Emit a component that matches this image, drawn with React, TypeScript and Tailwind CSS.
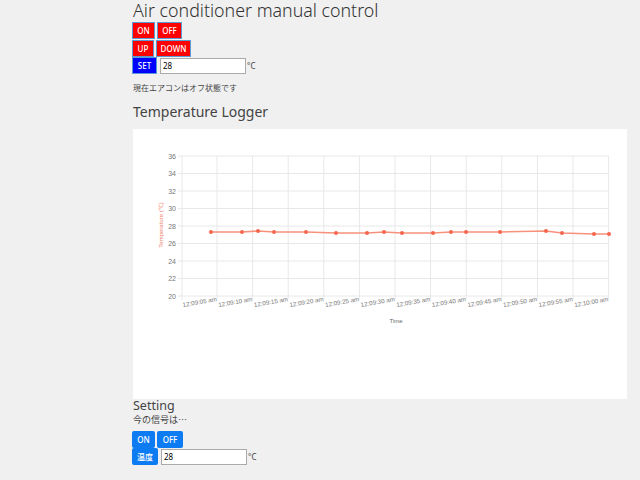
import React from 'react';

const font = { fontFamily: '"Noto Sans", "Noto Sans CJK JP", sans-serif' };

// chart geometry, relative to the white panel
const LEFT = 49;
const RIGHT = 476;
const TOP = 27;
const BOTTOM = 167;
const yTicks = [36, 34, 32, 30, 28, 26, 24, 22, 20];
const xLabels = [
  '12:09:05 am', '12:09:10 am', '12:09:15 am', '12:09:20 am', '12:09:25 am', '12:09:30 am',
  '12:09:35 am', '12:09:40 am', '12:09:45 am', '12:09:50 am', '12:09:55 am', '12:10:00 am',
];
const points: [number, number][] = [
  [211, 232], [242, 232], [258, 231], [274, 232], [306, 232], [336, 233], [367, 233],
  [384, 232], [402, 233], [433, 233], [451, 232], [466, 232], [500, 232], [546, 231],
  [562, 233], [594, 234], [609, 234],
].map(([x, y]) => [x - 133, y - 129] as [number, number]);

function Chart() {
  const yPos = (v: number) => TOP + ((36 - v) / 16) * (BOTTOM - TOP);
  const xPos = (i: number) => 84 + i * 35.6;
  return (
    <svg width="494" height="270" className="block" fontFamily='"Liberation Sans", Arial, sans-serif'>
      {yTicks.map((v) => (
        <g key={v}>
          <line x1={LEFT - 4} x2={RIGHT} y1={yPos(v)} y2={yPos(v)} stroke="#e8e8e8" strokeWidth="1" />
          <text x={LEFT - 6} y={yPos(v) + 2.5} textAnchor="end" fontSize="7" fill="#777">{v}</text>
        </g>
      ))}
      <line x1={LEFT} x2={LEFT} y1={TOP} y2={BOTTOM + 4} stroke="#e8e8e8" />
      {xLabels.map((l, i) => (
        <g key={l}>
          <line x1={xPos(i)} x2={xPos(i)} y1={TOP} y2={BOTTOM + 3} stroke="#e8e8e8" />
          <text
            x={xPos(i)}
            y={BOTTOM + 5}
            textAnchor="end"
            fontSize="6.2"
            fill="#777"
            transform={`rotate(-10 ${xPos(i)} ${BOTTOM + 5})`}
          >
            {l}
          </text>
        </g>
      ))}
      <text x="30" y="96" fontSize="6" fill="#f4826a" textAnchor="middle" transform="rotate(-90 30 96)">
        Temperature (℃)
      </text>
      <text x="263" y="194" fontSize="6" fill="#666" textAnchor="middle">Time</text>
      <polyline
        points={points.map((p) => p.join(',')).join(' ')}
        fill="none"
        stroke="#f8917c"
        strokeWidth="1.5"
      />
      {points.map(([x, y], i) => (
        <circle key={i} cx={x} cy={y} r="2" fill="#f5664c" />
      ))}
    </svg>
  );
}

export default function App() {
  return (
    <div className="min-h-screen bg-[#f0f0f0] pl-[133px] pr-[13px] text-[#333]" style={font}>
      <h1 className="text-[17.8px] leading-[20px] font-light text-[#333]">
        Air conditioner manual control
      </h1>

      {/* Controls */}
      <div className="mt-[2px] -ml-[1px] flex flex-col">
        <div className="flex gap-[2px]">
          <button className="h-[17px] w-[23px] border border-[#5b9bd5] bg-[#ff0000] text-[8px] font-medium text-white">ON</button>
          <button className="h-[17px] w-[25px] border border-[#5b9bd5] bg-[#ff0000] text-[8px] font-medium text-white">OFF</button>
        </div>
        <div className="mt-[1px] flex gap-[2px]">
          <button className="h-[17px] w-[22px] border border-[#5b9bd5] bg-[#ff0000] text-[8px] font-medium text-white">UP</button>
          <button className="h-[17px] w-[35px] border border-[#5b9bd5] bg-[#ff0000] text-[8px] font-medium text-white">DOWN</button>
        </div>
        <div className="flex items-center">
          <button className="h-[17px] w-[25px] border border-[#5b9bd5] bg-[#0000ff] text-[8px] font-medium text-white">SET</button>
          <input
            defaultValue="28"
            className="ml-[3px] h-[16px] w-[86px] border border-[#aaa] bg-white px-[2px] text-[8px] text-black outline-none"
          />
          <span className="ml-[1px] text-[8px] text-[#444]">°C</span>
        </div>
      </div>

      <p className="mt-[8px] text-[8px] leading-[12px] text-[#444]">現在エアコンはオフ状態です</p>

      <h2 className="mt-[8px] text-[14px] leading-[20px] font-normal text-[#444]">Temperature Logger</h2>

      <div className="mt-[7px] h-[270px] w-[494px] bg-white">
        <Chart />
      </div>

      {/* Setting */}
      <h3 className="text-[12.5px] leading-[14px] text-[#444]">Setting</h3>
      <p className="text-[9px] leading-[14px] text-[#444]">
        今の信号は<span style={{ fontFamily: '"Noto Sans CJK JP", sans-serif' }}>…</span>
      </p>
      <div className="mt-[4px] -ml-[1px] flex flex-col">
        <div className="flex gap-[2px]">
          <button className="h-[17px] w-[23px] rounded-[2px] bg-[#0d7cf2] text-[8px] font-medium text-white">ON</button>
          <button className="h-[17px] w-[26px] rounded-[2px] bg-[#0d7cf2] text-[8px] font-medium text-white">OFF</button>
        </div>
        <div className="flex items-center">
          <button className="h-[17px] w-[26px] rounded-[2px] bg-[#0d7cf2] text-[8px] font-medium text-white">温度</button>
          <input
            defaultValue="28"
            className="ml-[3px] h-[16px] w-[86px] border border-[#aaa] bg-white px-[2px] text-[8px] text-black outline-none"
          />
          <span className="ml-[1px] text-[8px] text-[#444]">°C</span>
        </div>
      </div>
    </div>
  );
}
